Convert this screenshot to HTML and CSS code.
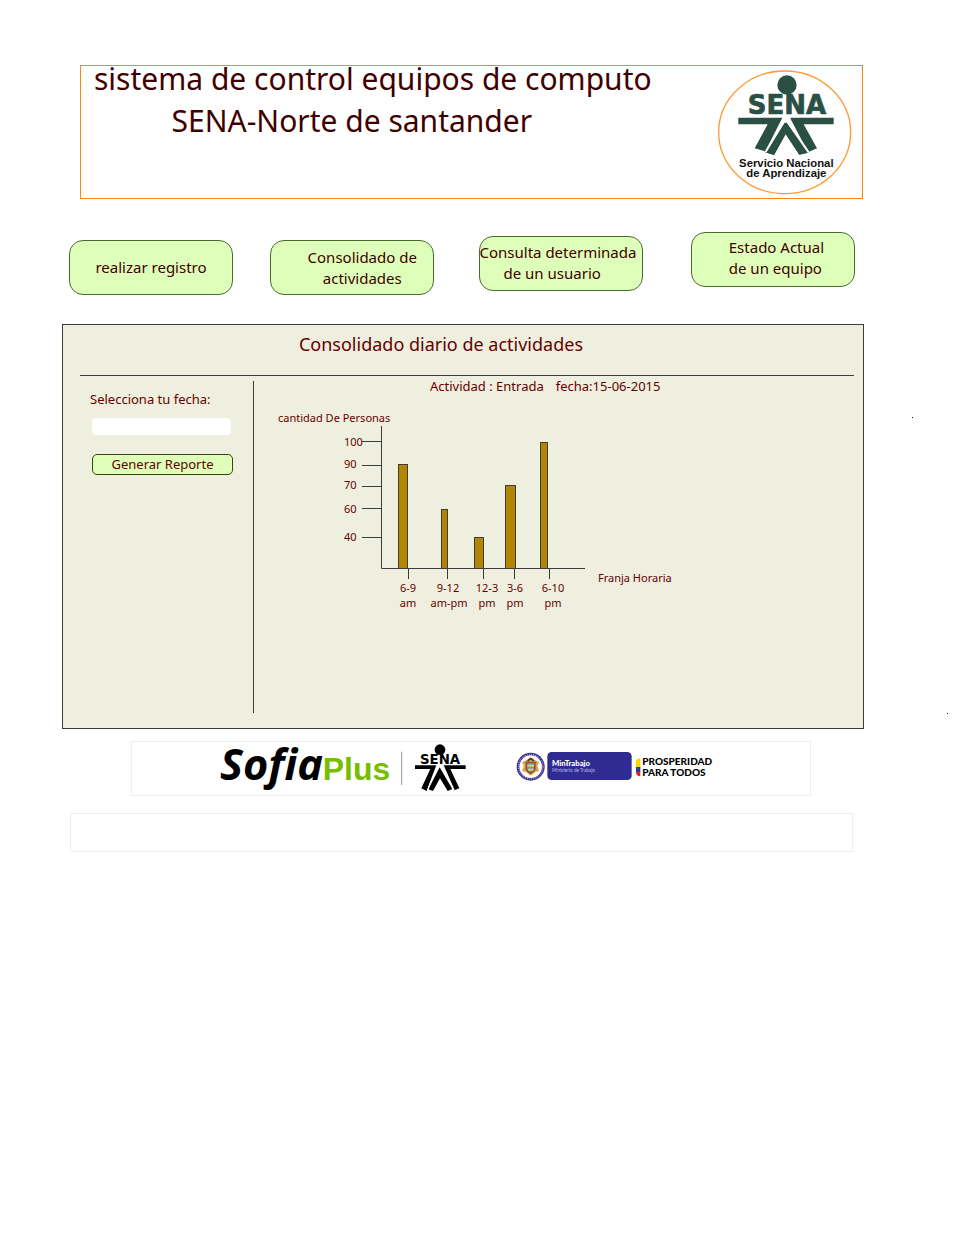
FILE: index.html
```html
<!DOCTYPE html>
<html lang="es">
<head>
<meta charset="utf-8">
<title>Sistema de control equipos de computo</title>
<link rel="stylesheet" href="styles.css">
</head>
<body>
<div class="page">
  <header class="banner">
    <h1 class="banner-title">sistema de control equipos de computo<br><span class="banner-place">SENA-Norte de santander</span></h1>
    <svg class="banner-logo" viewBox="48 38 414 387" role="img" aria-label="SENA Servicio Nacional de Aprendizaje">
      <ellipse cx="254" cy="231" rx="198" ry="184" fill="none" stroke="#ff9a35" stroke-width="4"/>
      <g fill="#2a5045">
        <circle cx="261" cy="89" r="29"/>
        <text class="logo-sena" x="143" y="176" font-size="78" stroke="#2a5045" stroke-width="2">SENA</text>
        <path d="M115 187H247L196 288L164 279L203 207H115ZM270 187H401V207H311L351 279L324 291ZM257 199L324 291L298 298L257 236L222 299L194 290Z"/>
        <path d="M257 197L326 292L298 298L257 236L222 299L193 290Z"/>
      </g>
      <path d="M250 187L257 199L270 187M252 199L196 291M262 199L326 291" fill="none" stroke="#fff" stroke-width="6"/>
      <g class="logo-caption">
        <text x="259" y="334">Servicio Nacional</text>
        <text x="259" y="365">de Aprendizaje</text>
      </g>
    </svg>
  </header>

  <nav class="menu" aria-label="Principal">
    <button class="menu-item" type="button">realizar registro</button>
    <button class="menu-item menu-item-shifted" type="button">Consolidado de<br>actividades</button>
    <button class="menu-item menu-item-start menu-item-raised" type="button">Consulta determinada<br><span class="menu-indent">de un usuario</span></button>
    <button class="menu-item menu-item-inset menu-item-top" type="button">Estado Actual<br>de un equipo</button>
  </nav>

  <main class="panel">
    <h2 class="panel-title">Consolidado diario de actividades</h2>
    <div class="panel-body">
      <form class="filters">
        <label class="filters-label" for="fecha">Selecciona tu fecha:</label>
        <input class="filters-input" id="fecha" name="fecha" type="text">
        <button class="filters-button" type="button">Generar Reporte</button>
      </form>
      <section class="report">
        <h3 class="report-title"><span>Actividad : Entrada</span><span>fecha:15-06-2015</span></h3>
        <svg class="chart" viewBox="270 405 420 215" role="img" aria-label="Cantidad de personas por franja horaria">
          <g class="chart-bars">
            <rect x="398.5" y="464.5" width="9" height="104"/>
            <rect x="441.5" y="509.5" width="6" height="59"/>
            <rect x="474.5" y="537.5" width="9" height="31"/>
            <rect x="505.5" y="485.5" width="10" height="83"/>
            <rect x="540.5" y="442.5" width="7" height="126"/>
          </g>
          <path class="chart-axis" d="M381.5 426V568.5H585M362 441.5H381M362 465.5H381M362 486.5H381M362 508.5H381M362 537.5H381M408.5 569V579M447.5 569V579M483.5 569V579M514.5 569V579M549.5 569V579"/>
          <g class="chart-text">
            <text x="278" y="422">cantidad De Personas</text>
            <text x="598" y="582">Franja Horaria</text>
            <text x="344" y="446">100</text>
            <text x="344" y="468">90</text>
            <text x="344" y="489">70</text>
            <text x="344" y="513">60</text>
            <text x="344" y="541">40</text>
          </g>
          <g class="chart-text chart-ticks">
            <text x="408" y="592">6-9</text><text x="408" y="607">am</text>
            <text x="448" y="592">9-12</text><text x="449" y="607">am-pm</text>
            <text x="487" y="592">12-3</text><text x="487" y="607">pm</text>
            <text x="515" y="592">3-6</text><text x="515" y="607">pm</text>
            <text x="553" y="592">6-10</text><text x="553" y="607">pm</text>
          </g>
        </svg>
      </section>
    </div>
    <span class="dot dot-upper"></span>
    <span class="dot dot-lower"></span>
  </main>

  <footer class="sponsors">
    <svg class="sponsor-sofia" viewBox="0 21 810 159" role="img" aria-label="SofiaPlus, SENA">
      <text class="sofia-word" x="30" y="136">Sofia</text>
      <text class="plus-word" x="338" y="136">Plus</text>
      <path d="M575 50V150" stroke="#999" stroke-width="3"/>
      <circle cx="690" cy="44" r="16"/>
      <text class="logo-sena" x="630" y="87" font-size="40">SENA</text>
      <path d="M615 91H681L650 168L634 160L661 102H615ZM698 91H767V102H721L748 160L733 166ZM689 97L727 162L713 168L690 130L669 168L655 163Z"/>
      <path d="M681 91L653 165M699 91L732 166" stroke="#fff" stroke-width="4"/>
    </svg>
    <svg class="sponsor-ministry" viewBox="0 21 690 159" role="img" aria-label="MinTrabajo, Prosperidad para todos">
      <circle cx="92" cy="95" r="38" fill="#fff" stroke="#332d8d" stroke-width="8"/>
      <circle cx="92" cy="95" r="37" fill="none" stroke="#d8d8ee" stroke-width="3" stroke-dasharray="3 3"/>
      <circle cx="92" cy="95" r="29" fill="#fff"/>
      <path d="M66 82L86 72L92 65L99 72L118 82L112 92L117 108L105 112L92 122L79 112L66 108L72 92Z" fill="#d7a643"/>
      <path d="M79 82H105V102Q101 111 92 115Q82 111 79 102Z" fill="#63a2b5" stroke="#a93c2c" stroke-width="4"/>
      <path d="M82 92H102M84 104H100" stroke="#f3d35a" stroke-width="5"/>
      <path d="M83 78Q92 65 101 78" fill="none" stroke="#493322" stroke-width="5"/>
      <rect x="142" y="51" width="253" height="84" rx="13" fill="#302b91"/>
      <text class="ministry-name" x="156" y="93">MinTrabajo</text>
      <text class="ministry-sub" x="156" y="112">Ministerio de Trabajo</text>
      <path d="M421 70V98H408V78Q410 70 421 70Z" fill="#ffd400"/>
      <path d="M408 96H421V111H408Z" fill="#22409a"/>
      <path d="M408 110H421V124Q408 123 408 110Z" fill="#e31b2e"/>
      <g class="slogan">
        <text x="427" y="91">PROSPERIDAD</text>
        <text x="427" y="122">PARA TODOS</text>
      </g>
    </svg>
  </footer>
  <div class="footer-bar"></div>
</div>
</body>
</html>
```
FILE: styles.css
```css
* {
  box-sizing: border-box;
}

body {
  margin: 0;
  background: #fff;
  color: #400000;
  font-family: "Noto Sans", "Open Sans", sans-serif;
}

.page {
  padding: 65px 116px 40px 62px;
}

.banner {
  display: flex;
  justify-content: space-between;
  margin: 0 1px 0 18px;
  padding: 0 8px 0 13px;
  min-height: 134px;
  border: 1px solid #ff850d;
}

.banner-title {
  margin: -8px 0 0;
  font-size: 30px;
  line-height: 42px;
  font-weight: 400;
  text-align: center;
}

.banner-place {
  padding-right: 42px;
}

.banner-logo {
  flex: none;
  width: 138px;
  height: 129px;
  margin-top: 2px;
}

.logo-sena {
  font-family: "DejaVu Sans", sans-serif;
  font-weight: 700;
}

.logo-caption {
  fill: #111;
  font-family: "Liberation Sans", Arial, sans-serif;
  font-size: 34px;
  font-weight: 700;
  text-anchor: middle;
}

.menu {
  display: grid;
  grid-template-columns: 201fr 208fr 212fr 164fr;
  align-items: start;
  margin: 33px 9px 0 7px;
  padding-bottom: 29px;
}

.menu-item {
  width: 164px;
  height: 55px;
  margin-top: 8px;
  padding: 0;
  border: 1px solid #4a6b30;
  border-radius: 14px;
  background: #deffba;
  color: #400000;
  font-family: inherit;
  font-size: 15px;
  line-height: 21px;
  white-space: nowrap;
}

.menu-item-shifted {
  padding-left: 20px;
}

.menu-item-start {
  padding-bottom: 2px;
  text-align: left;
}

.menu-item-raised {
  margin-top: 4px;
}

.menu-item-inset {
  padding-bottom: 4px;
  padding-left: 37px;
  text-align: left;
}

.menu-item-top {
  margin-top: 0;
}

.menu-indent {
  padding-left: 24px;
}

.panel {
  position: relative;
  padding: 0 9px 15px 17px;
  border: 1px solid #3c3c38;
  background: #eeefdf;
  color: #660000;
}

.panel-title {
  margin: 0;
  padding: 0 52px 11px 0;
  border-bottom: 1px solid #3c3c38;
  font-size: 18px;
  line-height: 39px;
  font-weight: 400;
  text-align: center;
}

.panel-body {
  display: flex;
  padding-top: 5px;
}

.filters {
  display: flex;
  flex-direction: column;
  flex: none;
  width: 174px;
  min-height: 332px;
  padding: 8px 20px 0 10px;
  border-right: 1px solid #3c3c38;
}

.filters-label {
  font-size: 13px;
  line-height: 20px;
}

.filters-input {
  height: 17px;
  margin: 9px 2px 19px;
  padding: 0 4px;
  border: 0;
  border-radius: 4px;
  background: #fff;
  font: inherit;
  font-size: 12px;
}

.filters-button {
  height: 21px;
  margin-left: 2px;
  padding: 0;
  border: 1px solid #3f4208;
  border-radius: 5px;
  background: #deffba;
  color: #660000;
  font-family: inherit;
  font-size: 13px;
  line-height: 19px;
}

.report {
  flex: 1;
  padding-left: 16px;
}

.report-title {
  display: flex;
  gap: 12px;
  margin: 0;
  padding: 0 0 14px 160px;
  font-size: 13px;
  line-height: 10px;
  font-weight: 400;
}

.chart {
  display: block;
  width: 420px;
  height: 215px;
}

.chart-bars {
  fill: #b38600;
  stroke: #3c3c38;
}

.chart-axis {
  fill: none;
  stroke: #3c3c38;
}

.chart-text {
  fill: #660000;
  font-size: 11px;
}

.chart-ticks {
  text-anchor: middle;
}

.dot {
  position: absolute;
  width: 1px;
  height: 1px;
  background: #222;
}

.dot-upper {
  top: 92px;
  right: -50px;
}

.dot-lower {
  top: 388px;
  right: -85px;
}

.sponsors {
  display: flex;
  gap: 20px;
  margin: 12px 53px 0 69px;
  padding-left: 78px;
  border: 1px solid #eee;
}

.sponsor-sofia {
  width: 270px;
  height: 53px;
  overflow: visible;
}

.sponsor-ministry {
  width: 230px;
  height: 53px;
}

.sofia-word {
  font-family: "Open Sans", sans-serif;
  font-size: 130px;
  font-style: italic;
  font-weight: 700;
}

.plus-word {
  fill: #78be00;
  font-family: "Liberation Sans", Arial, sans-serif;
  font-size: 96px;
  font-weight: 700;
}

.ministry-name {
  fill: #fff;
  font-family: Lato, sans-serif;
  font-size: 23px;
  font-weight: 900;
}

.ministry-sub {
  fill: #b9b7ea;
  font-family: Lato, sans-serif;
  font-size: 14px;
}

.slogan {
  font-family: Lato, sans-serif;
  font-size: 30px;
  font-weight: 900;
}

.footer-bar {
  height: 39px;
  margin: 17px 11px 0 8px;
  border: 1px solid #eee;
}
```
